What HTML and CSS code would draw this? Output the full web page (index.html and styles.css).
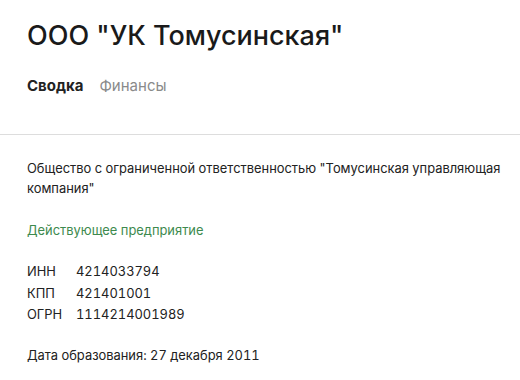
FILE: index.html
```html
<!DOCTYPE html>
<html lang="ru">
<head>
<meta charset="utf-8">
<link rel="stylesheet" href="styles.css">
</head>
<body>
<header class="head">
  <h1 class="title">ООО "УК Томусинская"</h1>
  <nav class="tabs">
    <span class="tab active">Сводка</span>
    <span class="tab">Финансы</span>
  </nav>
</header>
<main class="content">
  <p class="fullname">Общество с ограниченной ответственностью "Томусинская управляющая компания"</p>
  <p class="status">Действующее предприятие</p>
  <dl class="codes">
    <dt>ИНН</dt><dd>4214033794</dd>
    <dt>КПП</dt><dd>421401001</dd>
    <dt>ОГРН</dt><dd>1114214001989</dd>
  </dl>
  <p class="date">Дата образования: 27 декабря 2011</p>
</main>
</body>
</html>
```
FILE: styles.css
```css
html, body { margin: 0; padding: 0; background: #fff; }
body {
  font-family: Inter, "Noto Sans", sans-serif;
  color: #222;
}
.head {
  padding: 18px 27px 0;
  border-bottom: 1px solid #ddd;
  height: 116px;
}
.title {
  margin: 0;
  font-size: 27px;
  font-weight: 500;
  line-height: 36px;
  color: #1a1a1a;
}
.tabs {
  display: flex;
  gap: 16px;
  margin-top: 22px;
  font-size: 15px;
  line-height: 20px;
}
.tab { color: #8a8a8a; }
.tab.active { color: #222; font-weight: 700; }
.content {
  padding: 24px 10px 0 27px;
  font-size: 12.9px;
  line-height: 20px;
  font-variant-numeric: tabular-nums;
}
.content p { margin: 0; }
.status { color: #3d8a4e; margin-top: 22px !important; }
.codes {
  display: grid;
  grid-template-columns: 49px auto;
  margin: 21px 0 0;
  row-gap: 1.5px;
}
.codes dt, .codes dd { margin: 0; }
.date { margin-top: 21px !important; }
```
